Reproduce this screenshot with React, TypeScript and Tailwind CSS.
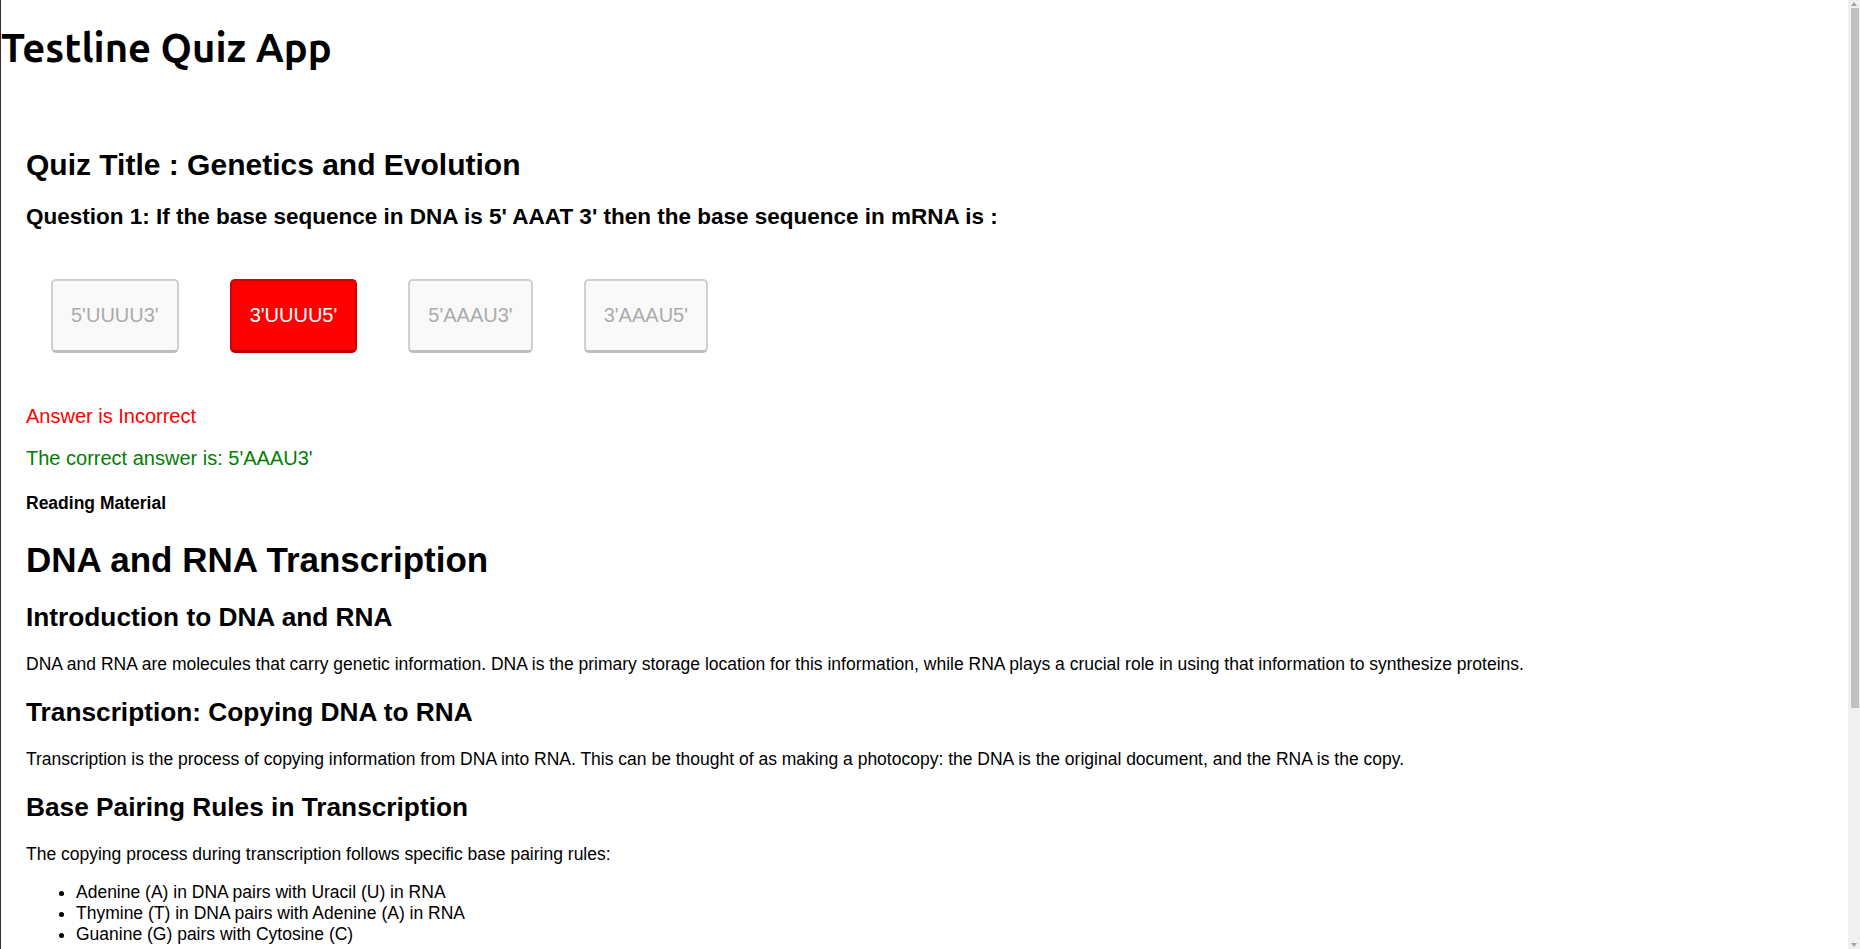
import React from 'react';

const options = ["5'UUUU3'", "3'UUUU5'", "5'AAAU3'", "3'AAAU5'"];
const selected = 1;

const pairingRules = [
  'Adenine (A) in DNA pairs with Uracil (U) in RNA',
  'Thymine (T) in DNA pairs with Adenine (A) in RNA',
  'Guanine (G) pairs with Cytosine (C)',
];

// window scrollbar as seen in the capture
const Scrollbar = () => (
  <div className="w-[12px] shrink-0 bg-[#f0f0f0] flex flex-col items-center">
    <div className="mt-[2px] w-0 h-0 border-l-[3px] border-r-[3px] border-b-[4px] border-l-transparent border-r-transparent border-b-[#a3a3a3]" />
    <div className="mt-[2px] ml-[2px] w-[8px] h-[700px] bg-[#c1c1c1]" />
    <div className="flex-1" />
    <div className="mb-[2px] w-0 h-0 border-l-[3px] border-r-[3px] border-t-[4px] border-l-transparent border-r-transparent border-t-[#a3a3a3]" />
  </div>
);

export default function App() {
  return (
    <div className="h-screen flex bg-white border-l border-[#3b2a36] text-black font-['Liberation_Sans',Arial,sans-serif]">
      <div className="flex-1 min-w-0 overflow-y-auto [scrollbar-width:none]">
        <h1 className="m-0 pt-[24px] text-[40px] leading-[48px] font-bold font-['Ubuntu','Roboto',sans-serif]">
          Testline Quiz App
        </h1>

        <main className="px-[25px] pb-[320px]">
          {/* Quiz header */}
          <h2 className="mt-[76px] text-[30px] leading-[34px] font-bold">Quiz Title : Genetics and Evolution</h2>
          <h3 className="mt-[22px] text-[22.5px] leading-[26px] font-bold">
            Question 1: If the base sequence in DNA is 5' AAAT 3' then the base sequence in mRNA is :
          </h3>

          {/* Options */}
          <div className="mt-[49px] flex gap-[51px] pl-[25px]">
            {options.map((opt, i) => (
              <button
                key={opt}
                disabled
                className={
                  i === selected
                    ? 'px-[18px] py-[23px] text-[20px] leading-[23px] rounded-[5px] border-2 border-b-[3px] border-[#d40000] border-b-[#b80000] bg-[#ff0000] text-white'
                    : 'px-[18px] py-[23px] text-[20px] leading-[23px] rounded-[5px] border-2 border-b-[3px] border-[#d0d0d0] border-b-[#bdbdbd] bg-[#f9f9f9] text-[#ababab]'
                }
              >
                {opt}
              </button>
            ))}
          </div>

          {/* Result */}
          <p className="mt-[52px] text-[20px] leading-[23px] text-[#ff0000]">Answer is Incorrect</p>
          <p className="mt-[19px] text-[20px] leading-[23px] text-[#008000]">The correct answer is: 5'AAAU3'</p>

          {/* Reading material */}
          <h4 className="mt-[23px] text-[17.5px] leading-[20px] font-bold">Reading Material</h4>
          <div className="text-[17.5px] leading-[20px]">
            <h1 className="mt-[27px] text-[35px] leading-[40px] font-bold">DNA and RNA Transcription</h1>
            <h2 className="mt-[22px] text-[26.25px] leading-[30px] font-bold">Introduction to DNA and RNA</h2>
            <p className="mt-[22px]">
              DNA and RNA are molecules that carry genetic information. DNA is the primary storage location for this
              information, while RNA plays a crucial role in using that information to synthesize proteins.
            </p>
            <h2 className="mt-[23px] text-[26.25px] leading-[30px] font-bold">Transcription: Copying DNA to RNA</h2>
            <p className="mt-[22px]">
              Transcription is the process of copying information from DNA into RNA. This can be thought of as making a
              photocopy: the DNA is the original document, and the RNA is the copy.
            </p>
            <h2 className="mt-[23px] text-[26.25px] leading-[30px] font-bold">Base Pairing Rules in Transcription</h2>
            <p className="mt-[22px]">The copying process during transcription follows specific base pairing rules:</p>
            <ul className="mt-[18px] list-disc pl-[50px] leading-[21px]">
              {pairingRules.map((r) => (
                <li key={r}>{r}</li>
              ))}
            </ul>
          </div>
        </main>
      </div>
      <Scrollbar />
    </div>
  );
}
